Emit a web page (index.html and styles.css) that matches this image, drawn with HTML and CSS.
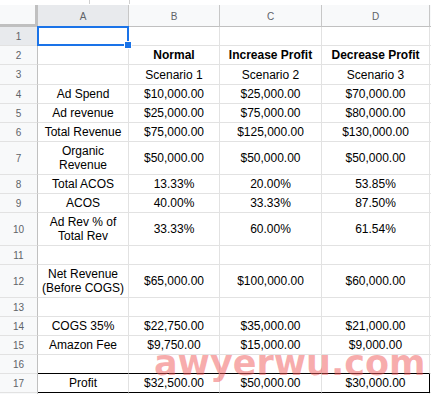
FILE: index.html
```html
<!DOCTYPE html>
<html>
<head>
<meta charset="utf-8">
<link rel="stylesheet" href="styles.css">
</head>
<body>
<div class="strip"><span class="tick t1"></span><span class="tick t2"></span></div>
<div class="sheet">
  <div class="corner"></div>
  <div class="colhead sel-head">A</div>
  <div class="colhead">B</div>
  <div class="colhead">C</div>
  <div class="colhead">D</div>
  <div class="colhead edge"></div>

  <div class="rowhead sel-head">1</div>
  <div class="cell a1"><div class="sel"></div><div class="handle"></div></div>
  <div class="cell"></div><div class="cell"></div><div class="cell"></div><div class="cell edge"></div>

  <div class="rowhead">2</div>
  <div class="cell"></div>
  <div class="cell bold">Normal</div>
  <div class="cell bold">Increase Profit</div>
  <div class="cell bold">Decrease Profit</div>
  <div class="cell edge"></div>

  <div class="rowhead">3</div>
  <div class="cell"></div>
  <div class="cell">Scenario 1</div>
  <div class="cell">Scenario 2</div>
  <div class="cell">Scenario 3</div>
  <div class="cell edge"></div>

  <div class="rowhead">4</div>
  <div class="cell">Ad Spend</div>
  <div class="cell">$10,000.00</div>
  <div class="cell">$25,000.00</div>
  <div class="cell">$70,000.00</div>
  <div class="cell edge"></div>

  <div class="rowhead">5</div>
  <div class="cell">Ad revenue</div>
  <div class="cell">$25,000.00</div>
  <div class="cell">$75,000.00</div>
  <div class="cell">$80,000.00</div>
  <div class="cell edge"></div>

  <div class="rowhead">6</div>
  <div class="cell">Total Revenue</div>
  <div class="cell">$75,000.00</div>
  <div class="cell">$125,000.00</div>
  <div class="cell">$130,000.00</div>
  <div class="cell edge"></div>

  <div class="rowhead">7</div>
  <div class="cell">Organic<br>Revenue</div>
  <div class="cell">$50,000.00</div>
  <div class="cell">$50,000.00</div>
  <div class="cell">$50,000.00</div>
  <div class="cell edge"></div>

  <div class="rowhead">8</div>
  <div class="cell">Total ACOS</div>
  <div class="cell">13.33%</div>
  <div class="cell">20.00%</div>
  <div class="cell">53.85%</div>
  <div class="cell edge"></div>

  <div class="rowhead">9</div>
  <div class="cell">ACOS</div>
  <div class="cell">40.00%</div>
  <div class="cell">33.33%</div>
  <div class="cell">87.50%</div>
  <div class="cell edge"></div>

  <div class="rowhead">10</div>
  <div class="cell">Ad Rev % of<br>Total Rev</div>
  <div class="cell">33.33%</div>
  <div class="cell">60.00%</div>
  <div class="cell">61.54%</div>
  <div class="cell edge"></div>

  <div class="rowhead">11</div>
  <div class="cell"></div><div class="cell"></div><div class="cell"></div><div class="cell"></div><div class="cell edge"></div>

  <div class="rowhead">12</div>
  <div class="cell">Net Revenue<br>(Before COGS)</div>
  <div class="cell">$65,000.00</div>
  <div class="cell">$100,000.00</div>
  <div class="cell">$60,000.00</div>
  <div class="cell edge"></div>

  <div class="rowhead">13</div>
  <div class="cell"></div><div class="cell"></div><div class="cell"></div><div class="cell"></div><div class="cell edge"></div>

  <div class="rowhead">14</div>
  <div class="cell">COGS 35%</div>
  <div class="cell">$22,750.00</div>
  <div class="cell">$35,000.00</div>
  <div class="cell">$21,000.00</div>
  <div class="cell edge"></div>

  <div class="rowhead">15</div>
  <div class="cell">Amazon Fee</div>
  <div class="cell">$9,750.00</div>
  <div class="cell">$15,000.00</div>
  <div class="cell">$9,000.00</div>
  <div class="cell edge"></div>

  <div class="rowhead">16</div>
  <div class="cell above-total"></div><div class="cell above-total"></div><div class="cell above-total"></div><div class="cell above-total"></div><div class="cell edge"></div>

  <div class="rowhead">17</div>
  <div class="cell total">Profit</div>
  <div class="cell total">$32,500.00</div>
  <div class="cell total">$50,000.00</div>
  <div class="cell total last">$30,000.00</div>
  <div class="cell edge"></div>

  <div class="rowhead"></div>
  <div class="cell"></div><div class="cell"></div><div class="cell"></div><div class="cell"></div><div class="cell edge"></div>
</div>
<div class="watermark">awyerwu.com</div>
</body>
</html>
```

FILE: styles.css
```css
html, body {
  margin: 0;
  padding: 0;
  background: #ffffff;
  overflow: hidden;
}

body {
  position: relative;
  width: 431px;
  height: 394px;
  font-family: "Liberation Sans", Arial, sans-serif;
  font-size: 12px;
  color: #000;
}

.strip {
  height: 5px;
  position: relative;
  background: #fff;
}

.tick {
  position: absolute;
  top: 0;
  width: 1px;
  height: 4px;
  background: #d0d0d0;
}

.t1 { left: 89px; }
.t2 { left: 129px; }

.sheet {
  display: grid;
  grid-template-columns: 38px 91px 91px 102px 108px 1fr;
  grid-template-rows: 22px 19px 19px 20px 19px 19px 19px 33px 19px 19px 33px 19px 33px 19px 19px 19px 19px 19px 19px;
}

.sheet > div {
  box-sizing: border-box;
  display: flex;
  align-items: center;
  justify-content: center;
  text-align: center;
  overflow: hidden;
}

.corner {
  background: #f8f9fa;
  border-right: 3px solid #c0c0c0;
  border-bottom: 3px solid #c0c0c0;
}

.colhead {
  background: #f8f9fa;
  border-right: 1px solid #c7c7c7;
  border-bottom: 1px solid #c0c0c0;
  color: #5f6368;
  font-size: 10px;
  padding-top: 1px;
}

.rowhead {
  background: #f8f9fa;
  border-right: 1px solid #c0c0c0;
  border-bottom: 1px solid #e2e2e2;
  color: #5f6368;
  font-size: 10px;
}

.sel-head {
  background: #e8eaed;
}

.cell {
  border-right: 1px solid #e2e2e2;
  border-bottom: 1px solid #e2e2e2;
  line-height: 14px;
}

.cell.edge, .colhead.edge {
  border-right: none;
}

.bold {
  font-weight: bold;
}

.a1 {
  position: relative;
  overflow: visible !important;
}

.sel {
  position: absolute;
  left: -1px;
  top: -1px;
  right: -1px;
  bottom: -1px;
  border: 2px solid #1a73e8;
}

.handle {
  position: absolute;
  right: -4px;
  bottom: -4px;
  width: 6px;
  height: 6px;
  background: #1a73e8;
  border: 1px solid #fff;
  z-index: 2;
}

.above-total {
  border-bottom: 1px solid #000 !important;
}

.total {
  border-bottom: 1px solid #000 !important;
}

.total.last {
  border-right: 1px solid #000;
}

.watermark {
  position: absolute;
  left: 154px;
  top: 343px;
  font-family: "DejaVu Sans", "Liberation Sans", sans-serif;
  font-weight: bold;
  font-size: 35px;
  line-height: 40px;
  color: rgba(240, 90, 90, 0.5);
  pointer-events: none;
  white-space: nowrap;
}
```
